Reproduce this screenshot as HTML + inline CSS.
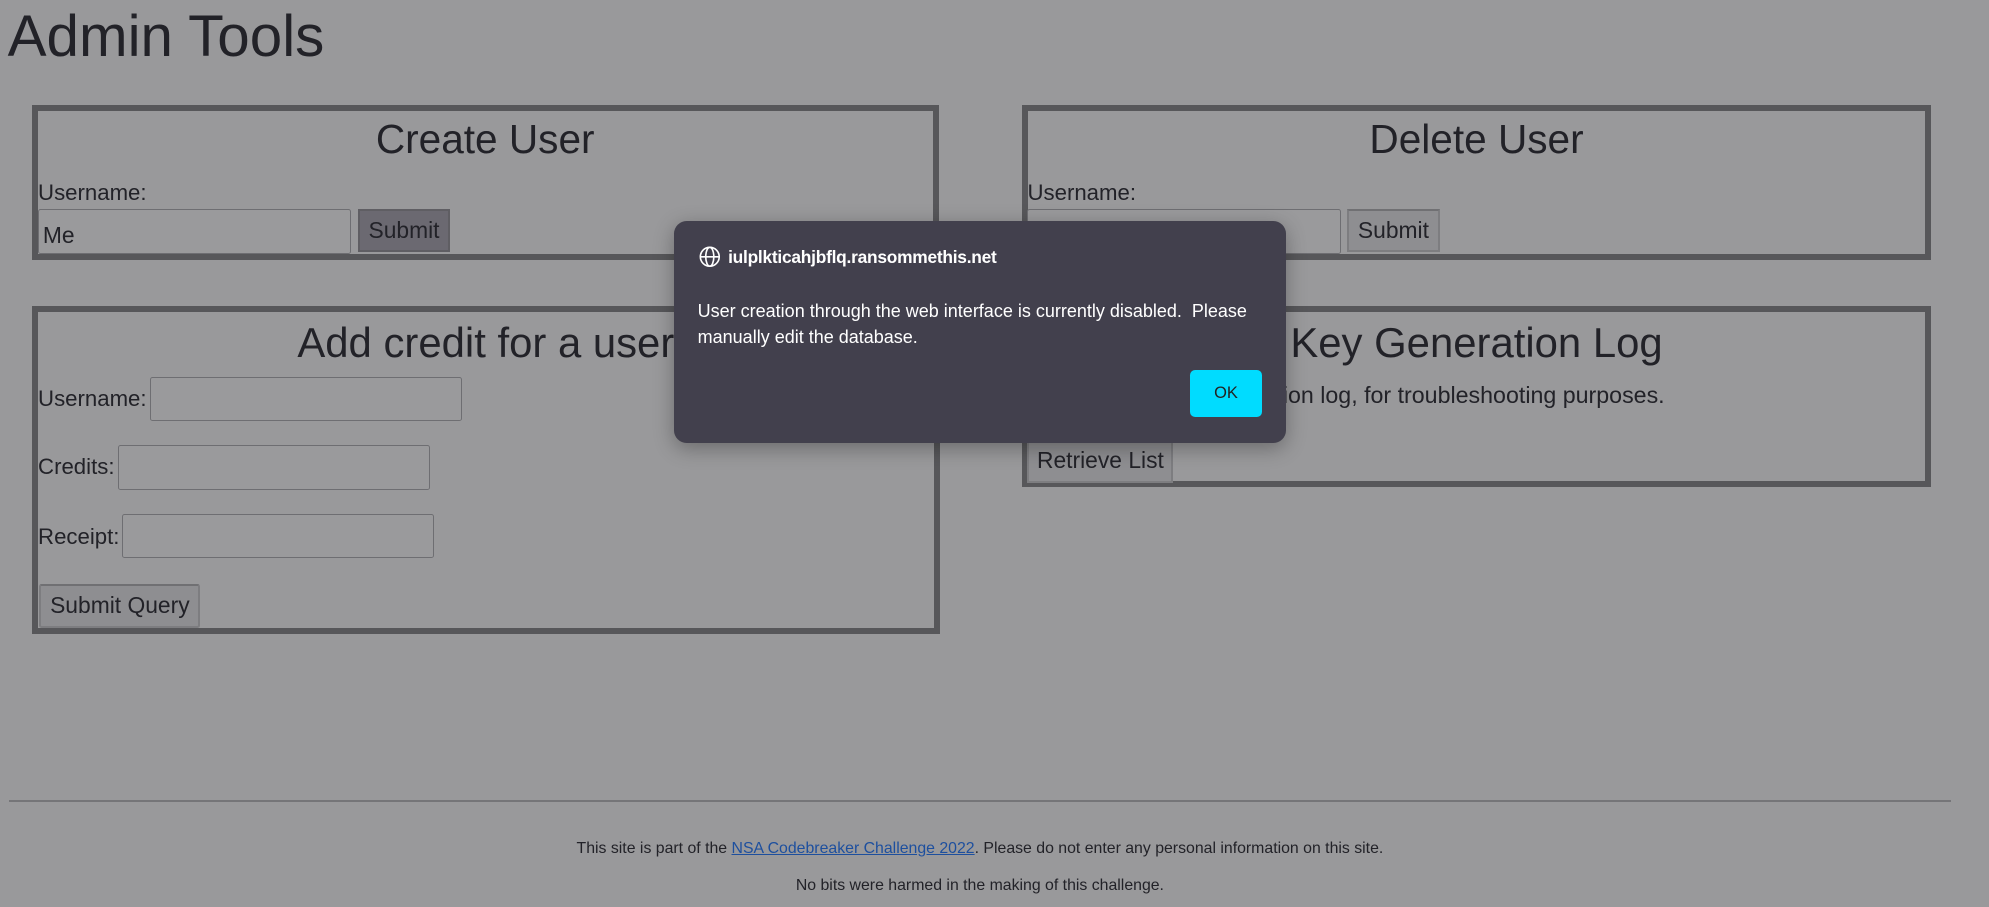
<!DOCTYPE html>
<html><head><meta charset="utf-8"><style>
html,body{margin:0;padding:0;background:#99999b;overflow:hidden}
body{width:1989px;height:907px}
#w{zoom:1.2685;position:relative;width:1568px;height:715px;font-family:"Liberation Sans",sans-serif;color:#222228}
.a{position:absolute;white-space:nowrap}
.box{position:absolute;border:5px solid #57575a;box-sizing:border-box}
.t{position:absolute;left:0;right:0;text-align:center;font-size:32px}
.inp{position:absolute;border:1px solid #6e6e72;border-radius:2px;box-sizing:border-box;background:#9a9a9c;font-size:18px;padding:8px 3px}
.btn{position:absolute;box-sizing:border-box;border:2px solid #7d7d80;border-top-color:#707073;background:#8e8e91;font-size:18px;text-align:center;line-height:30px}
.lbl{font-size:17.5px}
</style></head><body><div id="w">
<div class="a" style="left:6px;top:2px;font-size:46px">Admin Tools</div>

<div class="box" style="left:25px;top:83px;width:715px;height:122px">
 <div class="t" style="top:4px">Create User</div>
</div>
<div class="a lbl" style="left:30px;top:142px">Username:</div>
<div class="inp" style="left:30px;top:165px;width:247px;height:35px;padding:9px 3px">Me</div>
<div class="btn" style="left:282px;top:165px;width:73px;height:34px;background:#6b6971;border-color:#5f5e63">Submit</div>

<div class="box" style="left:806px;top:83px;width:716px;height:122px">
 <div class="t" style="top:4px">Delete User</div>
</div>
<div class="a lbl" style="left:810px;top:142px">Username:</div>
<div class="inp" style="left:810px;top:165px;width:247px;height:35px"></div>
<div class="btn" style="left:1062px;top:165px;width:73px;height:34px">Submit</div>

<div class="box" style="left:25px;top:241px;width:716px;height:259px">
 <div class="t" style="top:6px;font-size:33px">Add credit for a user</div>
</div>
<div class="a lbl" style="left:30px;top:304px">Username:</div>
<div class="inp" style="left:118px;top:297px;width:246px;height:35px"></div>
<div class="a lbl" style="left:30px;top:358px">Credits:</div>
<div class="inp" style="left:93px;top:351px;width:246px;height:35px"></div>
<div class="a lbl" style="left:30px;top:413px">Receipt:</div>
<div class="inp" style="left:96px;top:405px;width:246px;height:35px"></div>
<div class="btn" style="left:31px;top:460px;width:127px;height:35px;border-radius:2px">Submit Query</div>

<div class="box" style="left:806px;top:241px;width:716px;height:143px">
 <div class="t" style="top:6px;font-size:33px">Key Generation Log</div>
</div>
<div class="a" style="left:812px;top:301px;font-size:18.3px">Retrieve the key generation log, for troubleshooting purposes.</div>
<div class="btn" style="left:810px;top:346px;width:115px;height:35px">Retrieve List</div>

<div class="a" style="left:7px;top:631px;width:1531px;height:1px;background:#757578"></div>
<div class="a" style="left:0;width:1545px;top:662px;text-align:center;font-size:12.5px">This site is part of the <span style="color:#1d4f9e;text-decoration:underline">NSA Codebreaker Challenge 2022</span>. Please do not enter any personal information on this site.</div>
<div class="a" style="left:0;width:1545px;top:691px;text-align:center;font-size:12.5px">No bits were harmed in the making of this challenge.</div>

<div class="a" style="left:531px;top:174px;width:483px;height:175px;background:#42404d;border-radius:10px;box-shadow:0 4px 16px rgba(0,0,0,.3);color:#fff">
 <svg style="position:absolute;left:20px;top:20px" width="17" height="17" viewBox="0 0 16 16" fill="none" stroke="#fff" stroke-width="1.2"><circle cx="8" cy="8" r="7"/><ellipse cx="8" cy="8" rx="3" ry="7"/><path d="M1 8h14"/></svg>
 <div class="a" style="left:43px;top:21px;font-size:13.7px;font-weight:bold;letter-spacing:-0.2px">iulplkticahjbflq.ransommethis.net</div>
 <div class="a" style="left:19px;top:62px;font-size:14.2px;line-height:20px">User creation through the web interface is currently disabled.&nbsp; Please<br>manually edit the database.</div>
 <div class="a" style="left:407px;top:118px;width:57px;height:37px;background:#00dcff;border-radius:4px;color:#222;font-size:13px;text-align:center;line-height:37px">OK</div>
</div>
</div></body></html>
